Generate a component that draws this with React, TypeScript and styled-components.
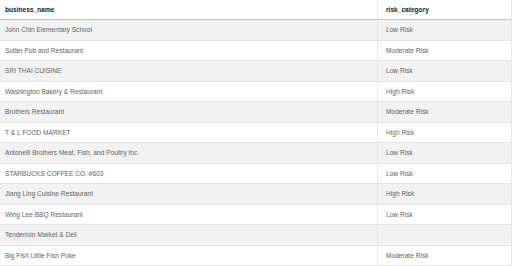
import React from "react";
import styled, { createGlobalStyle } from "styled-components";

const Global = createGlobalStyle`
  html, body { margin: 0; padding: 0; background: #ffffff; }
  body { font-family: "Liberation Sans", Arial, sans-serif; }
`;

const rows: [string, string][] = [
  ["John Chin Elementary School", "Low Risk"],
  ["Sutter Pub and Restaurant", "Moderate Risk"],
  ["SRI THAI CUISINE", "Low Risk"],
  ["Washington Bakery & Restaurant", "High Risk"],
  ["Brothers Restaurant", "Moderate Risk"],
  ["T & L FOOD MARKET", "High Risk"],
  ["Antonelli Brothers Meat, Fish, and Poultry Inc.", "Low Risk"],
  ["STARBUCKS COFFEE CO. #603", "Low Risk"],
  ["Jiang Ling Cuisine Restaurant", "High Risk"],
  ["Wing Lee BBQ Restaurant", "Low Risk"],
  ["Tenderloin Market & Deli", ""],
  ["Big Fish Little Fish Poke", "Moderate Risk"],
];

const Table = styled.div`
  width: 511px;
  display: flex;
  flex-direction: column;
  border-right: 1px solid #e6e6e6;
`;

const Row = styled.div<{ $striped?: boolean; $head?: boolean }>`
  display: grid;
  grid-template-columns: 377px 1fr;
  height: ${(p) => (p.$head ? "20px" : "20.5px")};
  box-sizing: border-box;
  background: ${(p) => (p.$striped ? "#f2f2f2" : "#ffffff")};
  border-bottom: 1px solid ${(p) => (p.$head ? "#c4c4c4" : "#e3e3e3")};
`;

const Cell = styled.div<{ $head?: boolean; $second?: boolean }>`
  display: flex;
  align-items: center;
  padding-left: ${(p) => (p.$second ? "8px" : "5px")};
  font-size: 6.6px;
  color: ${(p) => (p.$head ? "#222222" : "#626262")};
  font-weight: ${(p) => (p.$head ? 700 : 400)};
  border-left: ${(p) => (p.$second ? "1px solid #e6e6e6" : "none")};
  white-space: nowrap;
  overflow: hidden;
`;

export default function App() {
  return (
    <>
      <Global />
      <Table>
        <Row $head>
          <Cell $head>business_name</Cell>
          <Cell $head $second>risk_category</Cell>
        </Row>
        {rows.map(([name, risk], i) => (
          <Row key={i} $striped={i % 2 === 0}>
            <Cell>{name}</Cell>
            <Cell $second>{risk}</Cell>
          </Row>
        ))}
      </Table>
    </>
  );
}
